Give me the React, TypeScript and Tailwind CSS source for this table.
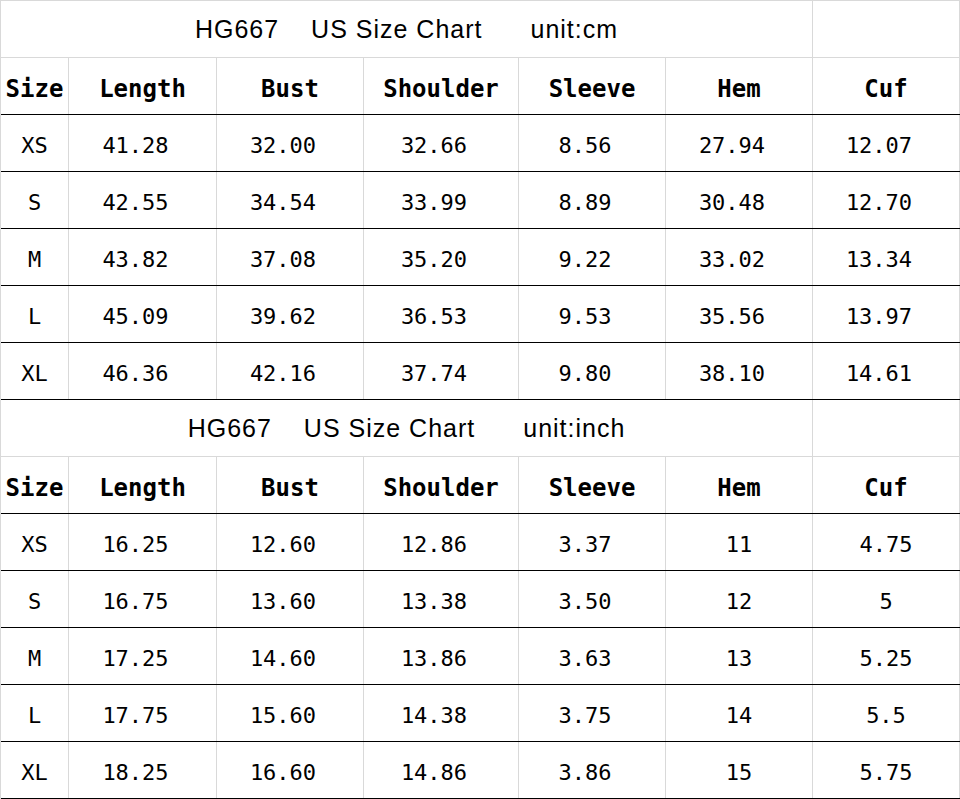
import React from "react";

const widths = ["w-[68px]", "w-[148px]", "w-[147px]", "w-[155px]", "w-[147px]", "w-[147px]", "w-[147px]"];

const headers = ["Size", "Length", "Bust", "Shoulder", "Sleeve", "Hem", "Cuf"];

type Row = string[];

const cmRows: Row[] = [
  ["XS", "41.28", "32.00", "32.66", "8.56", "27.94", "12.07"],
  ["S", "42.55", "34.54", "33.99", "8.89", "30.48", "12.70"],
  ["M", "43.82", "37.08", "35.20", "9.22", "33.02", "13.34"],
  ["L", "45.09", "39.62", "36.53", "9.53", "35.56", "13.97"],
  ["XL", "46.36", "42.16", "37.74", "9.80", "38.10", "14.61"],
];

const inchRows: Row[] = [
  ["XS", "16.25", "12.60", "12.86", "3.37", "11", "4.75"],
  ["S", "16.75", "13.60", "13.38", "3.50", "12", "5"],
  ["M", "17.25", "14.60", "13.86", "3.63", "13", "5.25"],
  ["L", "17.75", "15.60", "14.38", "3.75", "14", "5.5"],
  ["XL", "18.25", "16.60", "14.86", "3.86", "15", "5.75"],
];

const mono = "font-['DejaVu_Sans_Mono','Liberation_Mono',monospace]";

function TitleRow({ unit }: { unit: string }) {
  return (
    <div className="flex h-[57px] border-b border-[#d9d9d9]">
      <div className="w-[812px] flex items-center justify-center border-r border-[#d9d9d9] pt-[2px] font-['Liberation_Sans',Arial,sans-serif] text-[25px] tracking-[1px] text-black whitespace-pre">
        <span>HG667</span>
        <span className="ml-[32px]">US Size Chart</span>
        <span className="ml-[48px]">{unit}</span>
      </div>
      <div className="w-[147px] border-r border-[#d9d9d9]" />
    </div>
  );
}

function HeaderRow() {
  return (
    <div className="flex h-[57px] border-b border-black">
      {headers.map((h, i) => (
        <div
          key={h}
          className={`${widths[i]} flex items-center justify-center border-r border-[#d9d9d9] pt-[5px] ${mono} text-[24px] font-bold text-black`}
        >
          {h}
        </div>
      ))}
    </div>
  );
}

function DataRow({ row, shift }: { row: Row; shift: boolean[] }) {
  return (
    <div className="flex h-[57px] border-b border-black">
      {row.map((v, i) => (
        <div
          key={i}
          className={`${widths[i]} flex items-center justify-center border-r border-[#d9d9d9] pt-[5px] ${mono} text-[22px] text-black ${shift[i] ? "pr-[14px]" : ""}`}
        >
          {v}
        </div>
      ))}
    </div>
  );
}

export default function App() {
  const cmShift = [false, true, true, true, true, true, true];
  const inchShift = [false, true, true, true, true, false, false];
  return (
    <div className="w-[960px] h-[799px] bg-white border-t border-l border-[#d9d9d9] overflow-hidden">
      <TitleRow unit="unit:cm" />
      <HeaderRow />
      {cmRows.map((r, i) => (
        <DataRow key={"c" + i} row={r} shift={cmShift} />
      ))}
      <TitleRow unit="unit:inch" />
      <HeaderRow />
      {inchRows.map((r, i) => (
        <DataRow key={"n" + i} row={r} shift={inchShift} />
      ))}
    </div>
  );
}
